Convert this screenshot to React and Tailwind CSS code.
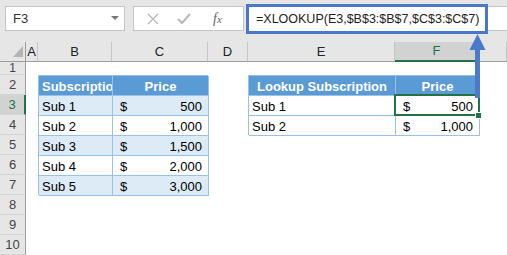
import React from "react";

const cols = [
  { key: "A", cls: "col-start-2" },
  { key: "B", cls: "col-start-3" },
  { key: "C", cls: "col-start-4" },
  { key: "D", cls: "col-start-5" },
  { key: "E", cls: "col-start-6" },
  { key: "F", cls: "col-start-7" },
  { key: "", cls: "col-start-8" },
];

const rows = [
  { n: 1, cls: "row-start-2" },
  { n: 2, cls: "row-start-3" },
  { n: 3, cls: "row-start-4" },
  { n: 4, cls: "row-start-5" },
  { n: 5, cls: "row-start-6" },
  { n: 6, cls: "row-start-7" },
  { n: 7, cls: "row-start-8" },
  { n: 8, cls: "row-start-9" },
  { n: 9, cls: "row-start-10" },
  { n: 10, cls: "row-start-11" },
];

const subs = [
  ["Sub 1", "500"],
  ["Sub 2", "1,000"],
  ["Sub 3", "1,500"],
  ["Sub 4", "2,000"],
  ["Sub 5", "3,000"],
];

function Money({ value }) {
  return (
    <div className="flex justify-between pl-[7px] pr-[6px]">
      <span>$</span>
      <span>{value}</span>
    </div>
  );
}

export default function App() {
  return (
    <div className="relative w-[507px] h-[255px] overflow-hidden bg-white font-['Liberation_Sans',Arial,sans-serif] text-[13px] text-black">
      {/* formula bar */}
      <div className="flex items-start h-[42px] bg-[#e6e6e6]">
        <div className="ml-[5px] mt-[6px] w-[120px] h-[25px] bg-white border border-[#c6c6c6] flex items-center justify-between pl-[7px] pr-[5px] text-[#333]">
          <span>F3</span>
          <svg width="8" height="5" viewBox="0 0 8 5">
            <path d="M0 0 L8 0 L4 4 Z" fill="#777" />
          </svg>
        </div>
        <div className="ml-[8px] mt-[6px] w-[111px] h-[25px] bg-white border border-[#c6c6c6] flex items-center">
          <svg className="ml-[13px]" width="12" height="12" viewBox="0 0 12 12">
            <path d="M1 1 L11 11 M11 1 L1 11" stroke="#b8b8b8" strokeWidth="1.4" />
          </svg>
          <svg className="ml-[18px]" width="14" height="12" viewBox="0 0 14 12">
            <path d="M1 6 L5 10 L13 1" stroke="#b8b8b8" strokeWidth="2" fill="none" />
          </svg>
          <span className="ml-[22px] font-['Liberation_Serif',serif] italic text-[14px] text-[#666]">
            f<span className="text-[11px]">x</span>
          </span>
        </div>
        <div className="ml-[2px] mt-[4px] w-[242px] h-[30px] bg-white border-[3px] border-[#4a78c8] flex items-center pl-[7px] text-[12.5px] text-[#222] whitespace-nowrap">
          =XLOOKUP(E3,$B$3:$B$7,$C$3:$C$7)
        </div>
        <div className="mt-[6px] flex-1 h-[25px] bg-white border-y border-[#c6c6c6]" />
      </div>

      {/* sheet */}
      <div className="grid grid-cols-[26px_12px_74px_96px_40px_147px_84px_28px] grid-rows-[20px_13px_repeat(9,20px)]">
        <div className="col-start-1 row-start-1 bg-[#e6e6e6] border-r border-b border-[#9e9e9e] relative">
          <svg className="absolute right-[2px] bottom-[4px]" width="10" height="11" viewBox="0 0 10 11">
            <path d="M10 0 L10 11 L0 11 Z" fill="#b5b5b5" />
          </svg>
        </div>
        {cols.map((c) => (
          <div
            key={c.cls}
            className={`${c.cls} row-start-1 flex items-center justify-center border-r ${
              c.key === "F"
                ? "bg-[#d2d2d2] border-[#9e9e9e] border-b-2 border-b-[#217346] text-[#217346]"
                : "bg-[#e6e6e6] border-[#c6c6c6] border-b border-b-[#9e9e9e] text-[#222]"
            }`}
          >
            {c.key}
          </div>
        ))}
        {rows.map((r) => (
          <div
            key={r.n}
            className={`col-start-1 ${r.cls} flex items-center justify-center border-b border-[#d4d4d4] ${
              r.n === 3
                ? "bg-[#d2d2d2] border-r-2 border-r-[#217346] text-[#217346]"
                : "bg-[#e6e6e6] border-r border-r-[#9e9e9e] text-[#444]"
            } ${r.n === 1 ? "text-[12px] leading-none" : ""}`}
          >
            {r.n}
          </div>
        ))}

        {/* table 1 */}
        <div className="col-start-3 col-span-2 row-start-3 row-span-6 grid grid-cols-[74px_96px] grid-rows-[repeat(6,20px)] border-l border-t border-[#9bc2e6] leading-[19px]">
          <div className="bg-[#5b9bd5] text-white font-bold border-r border-b border-[#9bc2e6] pl-[3px] overflow-hidden whitespace-nowrap pt-[1px]">
            Subscription
          </div>
          <div className="bg-[#5b9bd5] text-white font-bold border-r border-b border-[#9bc2e6] text-center pt-[1px]">
            Price
          </div>
          {subs.map(([s, v], i) => (
            <React.Fragment key={s}>
              <div
                className={`${i % 2 === 0 ? "bg-[#ddebf7]" : "bg-white"} border-r border-b border-[#9bc2e6] pl-[3px] pt-[1px]`}
              >
                {s}
              </div>
              <div
                className={`${i % 2 === 0 ? "bg-[#ddebf7]" : "bg-white"} border-r border-b border-[#9bc2e6] pt-[1px]`}
              >
                <Money value={v} />
              </div>
            </React.Fragment>
          ))}
        </div>

        {/* table 2 */}
        <div className="col-start-6 col-span-2 row-start-3 row-span-3 grid grid-cols-[147px_84px] grid-rows-[repeat(3,20px)] border-l border-t border-[#9bc2e6] leading-[19px]">
          <div className="bg-[#5b9bd5] text-white font-bold border-r border-b border-[#9bc2e6] text-center pt-[1px] whitespace-nowrap">
            Lookup Subscription
          </div>
          <div className="bg-[#5b9bd5] text-white font-bold border-r border-b border-[#9bc2e6] text-center pt-[1px]">
            Price
          </div>
          <div className="border-r border-b border-[#9bc2e6] pl-[3px] pt-[1px]">Sub 1</div>
          <div className="border-r border-b border-[#9bc2e6] pt-[1px]">
            <Money value="500" />
          </div>
          <div className="border-r border-b border-[#9bc2e6] pl-[3px] pt-[1px]">Sub 2</div>
          <div className="border-r border-b border-[#9bc2e6] pt-[1px]">
            <Money value="1,000" />
          </div>
        </div>
      </div>

      {/* selection F3 */}
      <div className="absolute left-[394px] top-[94px] w-[86px] h-[22px] border-2 border-[#217346]" />
      <div className="absolute left-[475px] top-[112px] w-[7px] h-[7px] bg-[#217346] border border-white" />

      {/* arrow */}
      <svg className="absolute left-[468px] top-[33px]" width="20" height="66" viewBox="0 0 20 66">
        <path d="M7 15 L12 15 L12 65 L7 65 Z" fill="#4a7bcb" />
        <path d="M1.5 17 L9.5 1 L17.5 17 Z" fill="#4a7bcb" />
      </svg>
    </div>
  );
}
